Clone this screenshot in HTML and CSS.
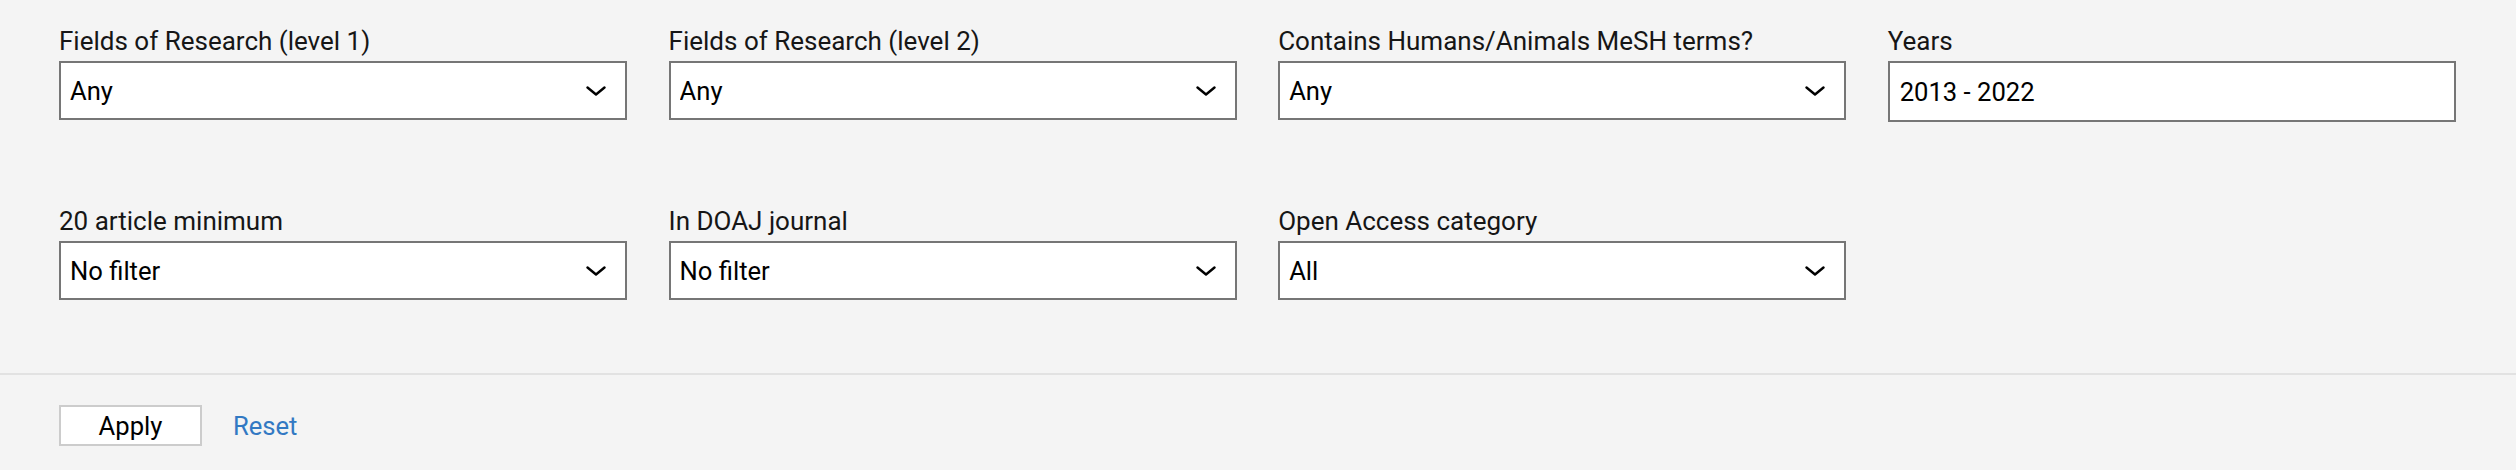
FILE: index.html
```html
<!DOCTYPE html>
<html lang="en">
<head>
<meta charset="utf-8">
<title>Filters</title>
<link rel="stylesheet" href="styles.css">
</head>
<body>
<form class="filters">
  <div class="grid">
    <div class="field">
      <label class="label">Fields of Research (level 1)</label>
      <div class="select-wrap">
        <select class="select"><option>Any</option></select>
        <svg class="chev" viewBox="0 0 20 10" width="20" height="10"><path d="M1.5 1.5 L10 8.5 L18.5 1.5"/></svg>
      </div>
    </div>
    <div class="field">
      <label class="label">Fields of Research (level 2)</label>
      <div class="select-wrap">
        <select class="select"><option>Any</option></select>
        <svg class="chev" viewBox="0 0 20 10" width="20" height="10"><path d="M1.5 1.5 L10 8.5 L18.5 1.5"/></svg>
      </div>
    </div>
    <div class="field">
      <label class="label">Contains Humans/Animals MeSH terms?</label>
      <div class="select-wrap">
        <select class="select"><option>Any</option></select>
        <svg class="chev" viewBox="0 0 20 10" width="20" height="10"><path d="M1.5 1.5 L10 8.5 L18.5 1.5"/></svg>
      </div>
    </div>
    <div class="field">
      <label class="label">Years</label>
      <input class="input" type="text" value="2013 - 2022">
    </div>
    <div class="field">
      <label class="label">20 article minimum</label>
      <div class="select-wrap">
        <select class="select"><option>No filter</option></select>
        <svg class="chev" viewBox="0 0 20 10" width="20" height="10"><path d="M1.5 1.5 L10 8.5 L18.5 1.5"/></svg>
      </div>
    </div>
    <div class="field">
      <label class="label">In DOAJ journal</label>
      <div class="select-wrap">
        <select class="select"><option>No filter</option></select>
        <svg class="chev" viewBox="0 0 20 10" width="20" height="10"><path d="M1.5 1.5 L10 8.5 L18.5 1.5"/></svg>
      </div>
    </div>
    <div class="field">
      <label class="label">Open Access category</label>
      <div class="select-wrap">
        <select class="select"><option>All</option></select>
        <svg class="chev" viewBox="0 0 20 10" width="20" height="10"><path d="M1.5 1.5 L10 8.5 L18.5 1.5"/></svg>
      </div>
    </div>
  </div>
  <div class="actions">
    <button type="button" class="btn">Apply</button>
    <a class="reset" href="#">Reset</a>
  </div>
</form>
</body>
</html>
```
FILE: styles.css
```css
html, body {
  margin: 0;
  padding: 0;
  background: #f4f4f4;
}
body {
  font-family: Roboto, "Liberation Sans", Arial, sans-serif;
  font-size: 25.6px;
  color: #161616;
}
.filters {
  margin: 0;
}
.grid {
  display: grid;
  grid-template-columns: repeat(4, 1fr);
  column-gap: 41.3px;
  row-gap: 83.5px;
  align-items: start;
  padding: 25.5px 60px 73.3px 59px;
  border-bottom: 2px solid #e2e2e2;
}
.field {
  display: flex;
  flex-direction: column;
  min-width: 0;
}
.label {
  display: block;
  font-size: 26px;
  line-height: 30px;
  margin-bottom: 5.5px;
  color: #161616;
}
.select-wrap {
  position: relative;
}
.select {
  -webkit-appearance: none;
  appearance: none;
  display: block;
  width: 100%;
  height: 59px;
  margin: 0;
  padding: 0 50px 0 9px;
  border: 2px solid #767676;
  border-radius: 0;
  background: #fff;
  font-family: inherit;
  font-size: 25.6px;
  line-height: 30px;
  color: #000;
  box-sizing: border-box;
}
.chev {
  position: absolute;
  right: 21px;
  top: 50%;
  margin-top: -5px;
  fill: none;
  stroke: #000;
  stroke-width: 2.4;
  stroke-linecap: round;
  stroke-linejoin: round;
  pointer-events: none;
}
.input {
  display: block;
  width: 100%;
  height: 61px;
  margin: 0;
  padding: 0 10px;
  border: 2px solid #767676;
  border-radius: 0;
  background: #fff;
  font-family: inherit;
  font-size: 25.6px;
  line-height: 30px;
  color: #000;
  box-sizing: border-box;
  outline: none;
}
.actions {
  display: flex;
  align-items: center;
  gap: 31px;
  padding: 30px 59px 0;
}
.btn {
  width: 143px;
  height: 41px;
  margin: 0;
  padding: 0;
  border: 2px solid #cccccc;
  border-radius: 0;
  background: #fff;
  font-family: inherit;
  font-size: 25.6px;
  line-height: 30px;
  color: #000;
  box-sizing: border-box;
}
.reset {
  font-size: 25.6px;
  line-height: 30px;
  color: #3279c3;
  text-decoration: none;
}
```
